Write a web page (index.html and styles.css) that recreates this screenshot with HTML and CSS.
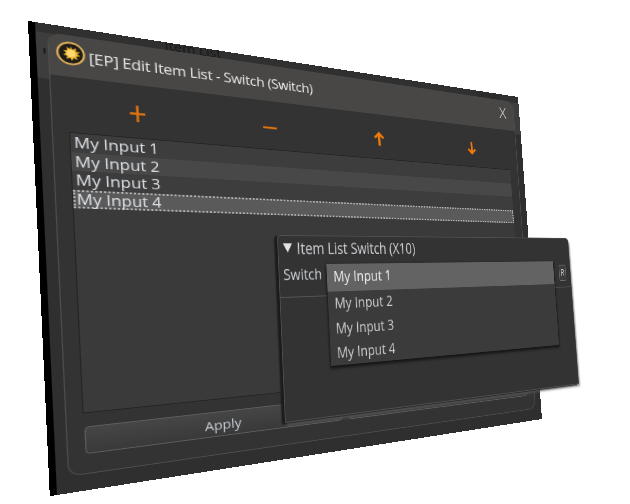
FILE: index.html
```html
<!DOCTYPE html>
<html lang="en">
<head>
<meta charset="utf-8">
<title>[EP] Edit Item List - Switch (Switch)</title>
<link rel="stylesheet" href="styles.css">
</head>
<body>
<div class="stage">
  <section class="editor">
    <span class="ghost ghost-list">Item List</span>
    <span class="ghost ghost-group">Group</span>
    <span class="grip"></span>
    <div class="panel">
      <header class="titlebar">
        <svg class="logo" viewBox="0 0 26 26" width="26" height="28" aria-hidden="true">
          <circle cx="13" cy="13" r="11.800" fill="#1e1c18" stroke="#e2b35a" stroke-width="2"/>
          <path d="M13 5l1.600 3.600 3.400-2-.6 3.900 3.800-.2-2.600 2.700 3 2-3.800.8 1 3.500-3.400-1.600-1.500 3.300-1.600-3.300-3.300 1.800.8-3.700-3.600-.6 2.800-2.600-2.800-2.300 3.800-.2-.6-3.800 3.300 1.800z" fill="#f6b92c"/>
          <circle cx="13" cy="13" r="4" fill="#ffd873"/>
        </svg>
        <h1 class="title">[EP] Edit Item List - Switch (Switch)</h1>
        <span class="close">X</span>
      </header>
      <div class="toolbar">
        <svg class="tool" viewBox="0 0 17 21" width="17" height="21" aria-hidden="true"><path d="M8.500 1v19M1 10.500h15" stroke="#e2740f" stroke-width="2.400" fill="none"/></svg>
        <svg class="tool" viewBox="0 0 16 4" width="16" height="4" aria-hidden="true"><path d="M0 2h16" stroke="#e2740f" stroke-width="2.600" fill="none"/></svg>
        <svg class="tool" viewBox="0 0 12 16" width="15" height="20" aria-hidden="true"><path d="M6 15.500V2M1.200 7L6 1.800 10.800 7" stroke="#ef7a08" stroke-width="2.600" fill="none"/></svg>
        <svg class="tool" viewBox="0 0 12 16" width="15" height="20" aria-hidden="true"><path d="M6 .5v13.500M1.400 9L6 14l4.600-5" stroke="#ef7a08" stroke-width="2.400" fill="none"/></svg>
      </div>
      <ul class="list">
        <li class="row">My Input 1</li>
        <li class="row row-alt">My Input 2</li>
        <li class="row">My Input 3</li>
        <li class="row row-sel">My Input 4</li>
      </ul>
      <footer class="actions">
        <button class="btn">Apply</button>
        <button class="btn">Cancel</button>
      </footer>
    </div>
  </section>

  <section class="switcher">
    <div class="sw-head"><span class="tri"></span>Item List Switch (X10)</div>
    <div class="sw-row">
      <span class="sw-label">Switch</span>
      <span class="sw-r">R</span>
    </div>
    <ul class="popup">
      <li class="opt opt-on">My Input 1</li>
      <li class="opt">My Input 2</li>
      <li class="opt">My Input 3</li>
      <li class="opt">My Input 4</li>
    </ul>
  </section>
</div>
</body>
</html>
```

FILE: styles.css
```css
* { box-sizing: border-box; }
html, body { margin: 0; padding: 0; background: #fff; }
.stage { position: relative; width: 630px; height: 504px; overflow: hidden; font-family: "Open Sans", "Liberation Sans", sans-serif; }
ul { list-style: none; margin: 0; padding: 0; }

/* main dialog: quad (35,22) (518,97) (542,419) (57,495) */
.editor {
  position: absolute; left: 0; top: 0;
  width: 600px; height: 500px;
  overflow: hidden;
  background: linear-gradient(#303030 0, #303030 2%, #3d3d3d 2%, #3d3d3d 12%, #2f2f2f 12%);
  box-shadow: -6px 0 0 #000;
  transform-origin: 0 0;
  transform: matrix3d(1.20435,.19978,0,.00077095, .04092,.91926,0,-.00005403, 0,0,1,0, 35,22,0,1);
  padding: 9px 10px 17px 10px;
}
.ghost { position: absolute; color: #161616; font-size: 15px; line-height: 16px; }
.ghost-list { left: 120px; top: -5px; }
.ghost-group { left: 528px; top: -4px; font-size: 13px; color: #222; }
.grip { position: absolute; left: 6px; top: 27px; width: 2px; height: 6px; background: #1e1e1e; }
.panel {
  position: relative;
  height: 100%;
  display: flex; flex-direction: column;
  background: #333;
  border: 1px solid #4e4e4e;
  border-top: 0;
  border-radius: 12px;
  overflow: hidden;
}
.titlebar {
  height: 46px;
  flex: none;
  display: flex; align-items: center; gap: 3px;
  padding: 0 13px 0 6px;
  background: #484745;
}
.logo { flex: none; margin-top: -6px; }
.title { margin: 0; flex: 1; font-size: 16px; letter-spacing: -.36px; font-weight: 400; color: #e8e8e8; white-space: nowrap; }
.close { font-size: 22px; font-weight: 300; color: #e4e4e4; margin-top: -8px; line-height: 24px; }
.toolbar {
  flex: none; height: 61px;
  padding-top: 6px;
  display: grid; grid-template-columns: repeat(4, 141px);
  margin-left: 8px;
  justify-items: center; align-items: center;
}
.list {
  flex: none; height: 303px;
  margin: 0 13px 0 14px;
  background: #3a3a3a;
  border: 1px solid #242424;
  border-width: 1px 0 1px 1px;
}
.row { height: 20.500px; line-height: 20px; padding-left: 3px; font-size: 16px; color: #dfe3e8; background: #3d3d3d; white-space: nowrap; }
.row-alt { background: #484848; }
.row-sel { background: #5a5a5a; border: 2px dotted #b4b4b4; line-height: 16px; padding-left: 1px; }
.actions {
  flex: none; height: 29px;
  margin: 14px 12px 0 15px;
  display: grid; grid-template-columns: 1fr 1fr; gap: 9px;
}
.btn {
  font: inherit; font-size: 15px; color: #c6ccd4;
  background: linear-gradient(#464646, #393939);
  border: 1px solid #5e5e5e; border-radius: 4px;
  padding: 0 4px 0 0;
}

/* floating node panel: quad (277,235) (568,238) (579,384) (285,423) */
.switcher {
  position: absolute; left: 0; top: 0;
  width: 480px; height: 200px;
  background: #333;
  border: 1px solid #505050;
  border-radius: 4px 6px 0 0;
  box-shadow: -4px 1px 2px #1b1b1b, 2px 3px 3px rgba(110,110,110,.7);
  transform-origin: 0 0;
  transform: matrix3d(.94010,.14615,0,.00058777, .010415,.8961,0,-.0001038, 0,0,1,0, 277,235,0,1);
  color: #cfd2d6;
}
.sw-head { height: 26px; display: flex; align-items: center; font-size: 17.500px; padding-left: 6px; }
.tri { width: 0; height: 0; margin-right: 6px; border: 6px solid transparent; border-top: 10px solid #e4e4e4; border-bottom: 0; }
.sw-row {
  height: 41px;
  border-bottom: 1px solid #555;
  display: flex; justify-content: space-between;
  padding: 2px 9px 0 5px;
  font-size: 17px;
}
.sw-label { line-height: 28px; }
.sw-r {
  width: 14px; height: 22px; margin-top: 8px;
  font-size: 12px; line-height: 20px; text-align: center;
  border: 1px solid #6a6a6a; border-radius: 2px; background: #3c3c3c;
}
.popup {
  position: absolute; left: 63px; top: 31px; width: 381px; height: 113px;
  background: #3b3b3b;
  box-shadow: 0 2px 3px 1px #161616;
}
.opt { height: 27.500px; line-height: 26px; padding-left: 9px; font-size: 17px; color: #cdcdcd; white-space: nowrap; }
.opt-on { height: 31px; line-height: 27px; background: #636363; color: #eee; }
```
